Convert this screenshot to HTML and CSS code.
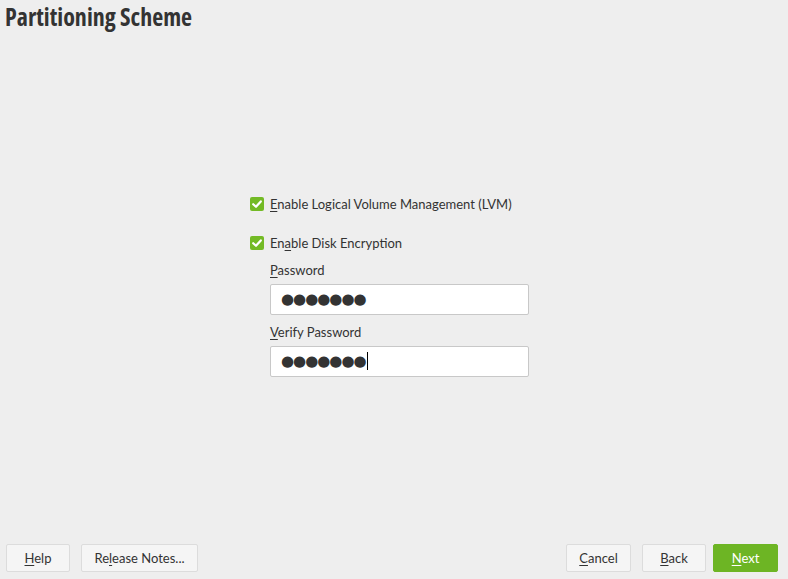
FILE: index.html
```html
<!DOCTYPE html>
<html>
<head>
<meta charset="utf-8">
<link rel="stylesheet" href="styles.css">
</head>
<body>
<div class="page">
  <h1 class="title">Partitioning Scheme</h1>
  <main class="main">
    <div class="form">
      <label class="check">
        <span class="box"><svg viewBox="0 0 14 14" width="14" height="14"><path d="M3.2 7.2 L6 9.8 L10.8 4.4" fill="none" stroke="#fff" stroke-width="2.2" stroke-linecap="round" stroke-linejoin="round"/></svg></span>
        <span><u>E</u>nable Logical Volume Management (LVM)</span>
      </label>
      <label class="check check2">
        <span class="box"><svg viewBox="0 0 14 14" width="14" height="14"><path d="M3.2 7.2 L6 9.8 L10.8 4.4" fill="none" stroke="#fff" stroke-width="2.2" stroke-linecap="round" stroke-linejoin="round"/></svg></span>
        <span>En<u>a</u>ble Disk Encryption</span>
      </label>
      <div class="fields">
        <div class="label"><u>P</u>assword</div>
        <div class="input"><span class="dots">●●●●●●●</span></div>
        <div class="label label2"><u>V</u>erify Password</div>
        <div class="input"><span class="dots">●●●●●●●</span><span class="caret"></span></div>
      </div>
    </div>
  </main>
  <footer class="footer">
    <div class="group">
      <button class="btn btn-help"><u>H</u>elp</button>
      <button class="btn btn-notes">Re<u>l</u>ease Notes...</button>
    </div>
    <div class="group">
      <button class="btn btn-cancel"><u>C</u>ancel</button>
      <button class="btn btn-back"><u>B</u>ack</button>
      <button class="btn btn-next"><u>N</u>ext</button>
    </div>
  </footer>
</div>
</body>
</html>
```
FILE: styles.css
```css
html, body {
  margin: 0;
  padding: 0;
  background: #eeeeee;
}
body {
  font-family: "Lato", "Noto Sans", sans-serif;
  font-size: 13px;
  color: #333333;
}
u {
  text-decoration: underline;
  text-underline-offset: 2px;
}
.page {
  height: 579px;
  display: flex;
  flex-direction: column;
}
.title {
  margin: 0;
  padding: 2px 0 0 5px;
  font-family: "Open Sans", sans-serif;
  font-stretch: 85%;
  font-weight: 700;
  font-size: 24px;
  line-height: 30px;
  color: #333333;
}
.main {
  flex: 1;
  display: flex;
  align-items: center;
  justify-content: center;
}
.form {
  width: 279px;
  margin-left: -9px;
  margin-top: -4px;
}
.check {
  display: flex;
  align-items: center;
  gap: 6px;
  height: 16px;
}
.check2 {
  margin-top: 23px;
}
.box {
  width: 14px;
  height: 14px;
  background: #73ba25;
  border-radius: 2px;
  display: flex;
}
.fields {
  margin-left: 20px;
  margin-top: 10px;
}
.label {
  height: 18px;
  line-height: 18px;
  margin-bottom: 5px;
}
.label2 {
  margin-top: 8px;
}
.input {
  height: 29px;
  background: #ffffff;
  border: 1px solid #c8c8c8;
  border-radius: 2px;
  display: flex;
  align-items: center;
  padding-left: 10px;
  box-sizing: content-box;
  width: 247px;
}
.dots {
  font-family: "DejaVu Sans", sans-serif;
  font-size: 15px;
  letter-spacing: -1px;
  color: #333333;
}
.caret {
  width: 1px;
  height: 18px;
  background: #000;
  margin-left: 1px;
}
.footer {
  display: flex;
  justify-content: space-between;
  padding: 0 10px 7px 6px;
}
.group {
  display: flex;
  gap: 11px;
}
.btn {
  height: 28px;
  font-family: inherit;
  font-size: 13px;
  color: #333333;
  background: #f5f5f5;
  border: 1px solid #dcdcdc;
  border-radius: 2px;
  padding: 0;
}
.btn-help { width: 64px; }
.btn-notes { width: 117px; }
.btn-cancel { width: 65px; }
.btn-back { width: 64px; }
.btn-next {
  width: 65px;
  margin-left: -4px;
  background: #6db524;
  border-color: #6db524;
  color: #ffffff;
}
```
